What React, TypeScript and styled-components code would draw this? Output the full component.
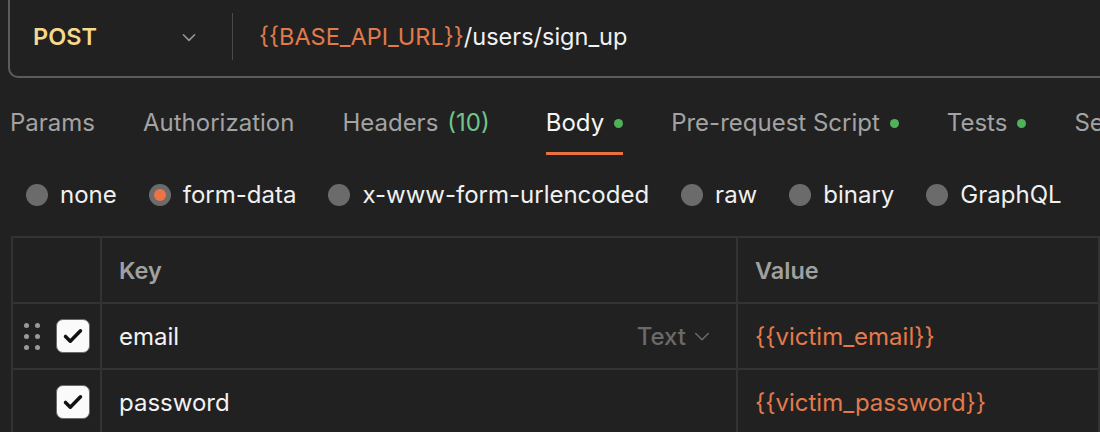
import React from 'react'
import styled, { createGlobalStyle } from 'styled-components'

const GlobalStyle = createGlobalStyle`
  html, body {
    margin: 0;
    background: #212121;
    overflow: hidden;
  }
  body {
    font-family: Inter, 'Noto Sans', sans-serif;
    color: #f0f0f0;
  }
`

const tabs = [
  { label: 'Params' },
  { label: 'Authorization' },
  { label: 'Headers', count: '(10)' },
  { label: 'Body', dot: true, active: true },
  { label: 'Pre-request Script', dot: true },
  { label: 'Tests', dot: true },
  { label: 'Settings' },
]

const bodyModes = ['none', 'form-data', 'x-www-form-urlencoded', 'raw', 'binary', 'GraphQL']

const rows = [
  { key: 'email', value: '{{victim_email}}', hovered: true },
  { key: 'password', value: '{{victim_password}}' },
]

const Chevron: React.FC<{ size?: number; color?: string }> = ({ size = 18, color = '#9a9a9a' }) => (
  <svg width={size} height={size} viewBox="0 0 16 16" fill="none">
    <path d="M3 6l5 5 5-5" stroke={color} strokeWidth="1.3" strokeLinecap="round" strokeLinejoin="round" />
  </svg>
)

const CheckIcon = () => (
  <svg width="24" height="24" viewBox="0 0 16 16" fill="none">
    <path d="M3 8.3l3.2 3.2 6.8-7" stroke="#111" strokeWidth="2.3" strokeLinecap="round" strokeLinejoin="round" />
  </svg>
)

export default function App() {
  return (
    <Page>
      <GlobalStyle />
      <UrlBar>
        <MethodSelect>
          <Method>POST</Method>
          <Chevron />
        </MethodSelect>
        <Divider />
        <UrlText>
          <Variable>{'{{BASE_API_URL}}'}</Variable>/users/sign_up
        </UrlText>
      </UrlBar>

      <Tabs>
        {tabs.map((t) => (
          <Tab key={t.label} active={t.active}>
            {t.label}
            {t.count && <Count>{t.count}</Count>}
            {t.dot && <Dot />}
          </Tab>
        ))}
      </Tabs>

      <Modes>
        {bodyModes.map((m) => (
          <Mode key={m}>
            <Radio checked={m === 'form-data'} />
            {m}
          </Mode>
        ))}
      </Modes>

      <Table>
        <HeadCell />
        <HeadCell>Key</HeadCell>
        <HeadCell>Value</HeadCell>
        {rows.map((r) => (
          <React.Fragment key={r.key}>
            <Cell>
              <Handle visible={r.hovered}>
                {Array.from({ length: 6 }).map((_, i) => (
                  <HandleDot key={i} />
                ))}
              </Handle>
              <Checkbox>
                <CheckIcon />
              </Checkbox>
            </Cell>
            <Cell>
              <KeyText>{r.key}</KeyText>
              {r.hovered && (
                <TypeSelect>
                  Text
                  <Chevron size={20} color="#6a6a6a" />
                </TypeSelect>
              )}
            </Cell>
            <Cell>
              <Variable>{r.value}</Variable>
            </Cell>
          </React.Fragment>
        ))}
      </Table>
    </Page>
  )
}

const Page = styled.div`
  width: 1100px;
  height: 432px;
  overflow: hidden;
`
const UrlBar = styled.div`
  display: flex;
  align-items: center;
  margin-left: 8px;
  height: 76px;
  border: 2px solid #5c5c5c;
  border-top: none;
  border-right: none;
  border-bottom-left-radius: 10px;
`
const MethodSelect = styled.div`
  display: flex;
  align-items: center;
  justify-content: space-between;
  width: 222px;
  box-sizing: border-box;
  padding: 0 34px 0 23px;
  margin-top: -3px;
`
const Method = styled.span`
  color: #f6d98b;
  font-weight: 600;
  font-size: 23.5px;
`
const Divider = styled.div`
  width: 1px;
  height: 47px;
  margin-top: -3px;
  background: #4a4a4a;
`
const UrlText = styled.div`
  padding-left: 26px;
  margin-top: -3px;
  font-size: 23.5px;
  color: #f2f2f2;
`
const Variable = styled.span`
  color: #e27a4b;
`
const Tabs = styled.div`
  display: flex;
  gap: 48px;
  margin-top: 31px;
  padding-left: 10px;
  white-space: nowrap;
`
const Tab = styled.div<{ active?: boolean }>`
  display: flex;
  align-items: center;
  font-size: 24px;
  line-height: 28px;
  padding-bottom: 15px;
  margin-left: ${(p) => (p.active ? '8px' : '0')};
  color: ${(p) => (p.active ? '#f5f5f5' : '#a3a3a3')};
  border-bottom: 3px solid ${(p) => (p.active ? '#e8713f' : 'transparent')};
`
const Count = styled.span`
  color: #70c48c;
  margin-left: 9px;
`
const Dot = styled.span`
  width: 9px;
  height: 9px;
  border-radius: 50%;
  background: #4fb15a;
  margin-left: 10px;
`
const Modes = styled.div`
  display: flex;
  gap: 32px;
  margin-top: 26px;
  padding-left: 26px;
`
const Mode = styled.div`
  display: flex;
  align-items: center;
  gap: 12px;
  font-size: 24px;
  line-height: 28px;
  color: #f0f0f0;
`
const Radio = styled.span<{ checked?: boolean }>`
  width: 22px;
  height: 22px;
  border-radius: 50%;
  background: #6b6b6b;
  display: flex;
  align-items: center;
  justify-content: center;
  &::after {
    content: '';
    display: ${(p) => (p.checked ? 'block' : 'none')};
    width: 12px;
    height: 12px;
    border-radius: 50%;
    background: #ec7346;
  }
`
const Table = styled.div`
  display: grid;
  grid-template-columns: 89px 636px 1fr;
  grid-auto-rows: 66px;
  margin: 27px 0 0 11px;
  border-top: 2px solid #333333;
  border-left: 2px solid #333333;
`
const HeadCell = styled.div`
  display: flex;
  align-items: center;
  padding-left: 17px;
  font-size: 23.5px;
  font-weight: 600;
  color: #a0a0a0;
  border-right: 2px solid #333333;
  border-bottom: 2px solid #333333;
`
const Cell = styled.div`
  display: flex;
  align-items: center;
  padding: 0 24px 0 17px;
  font-size: 24px;
  border-right: 2px solid #333333;
  border-bottom: 2px solid #333333;
  &:nth-child(3n + 1) {
    padding: 0 0 0 11px;
    gap: 16px;
  }
`
const Handle = styled.div<{ visible?: boolean }>`
  display: grid;
  grid-template-columns: 5px 5px;
  gap: 6px;
  visibility: ${(p) => (p.visible ? 'visible' : 'hidden')};
`
const HandleDot = styled.span`
  width: 5px;
  height: 5px;
  border-radius: 50%;
  background: #9a9a9a;
`
const Checkbox = styled.span`
  width: 34px;
  height: 34px;
  box-sizing: border-box;
  border-radius: 7px;
  border: 1.5px solid #6a6a6a;
  background: #fafafa;
  display: flex;
  align-items: center;
  justify-content: center;
`
const KeyText = styled.span`
  flex: 1;
  color: #f2f2f2;
`
const TypeSelect = styled.span`
  display: flex;
  align-items: center;
  gap: 6px;
  color: #6a6a6a;
  font-weight: 500;
`
